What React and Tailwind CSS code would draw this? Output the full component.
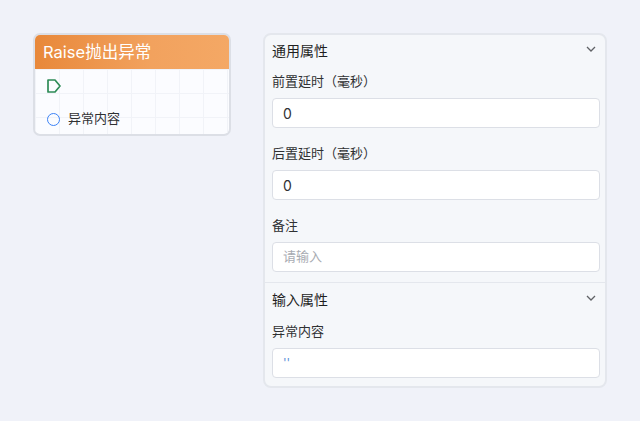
import React from "react";

const font = { fontFamily: '"Inter", "Noto Sans CJK SC", sans-serif' };

function Chevron() {
  return (
    <svg width="10" height="6" viewBox="0 0 10 6" fill="none">
      <path d="M1 1l4 4 4-4" stroke="#606266" strokeWidth="1.3" />
    </svg>
  );
}

function Field({ label, value, placeholder, mono }) {
  return (
    <div className="flex flex-col">
      <div className="h-[22px] text-[13px] leading-[22px] text-[#303133]">{label}</div>
      <div className="mt-[6px] h-[30px] rounded-[4px] border border-[#dcdfe6] bg-white px-[10px] flex items-center text-[14px]">
        {value !== undefined ? (
          <span className={mono ? "text-[#5a8fd8] text-[12px]" : "text-[#303133]"}>{value}</span>
        ) : (
          <span className="text-[#a8abb2] text-[13px]">{placeholder}</span>
        )}
      </div>
    </div>
  );
}

export default function App() {
  return (
    <div className="w-[640px] h-[421px] bg-[#f0f2f9] relative" style={font}>
      <div className="flex items-start pt-[33px] pl-[33px]">
        {/* Node */}
        <div className="w-[198px] h-[103px] rounded-[7px] border-2 border-[#dcdfe6] overflow-hidden bg-[#fbfcff] flex flex-col">
          <div className="h-[34px] shrink-0 flex items-center px-[8px] text-white text-[16.5px] bg-[linear-gradient(90deg,#e8883a,#f2a25e_60%,#f4a865)]">
            Raise抛出异常
          </div>
          <div
            className="flex-1 flex flex-col pl-[11px]"
            style={{
              backgroundImage:
                "linear-gradient(#f1f3f8 1px, transparent 1px), linear-gradient(90deg, #f1f3f8 1px, transparent 1px)",
              backgroundSize: "24px 24px",
            }}
          >
            <div className="h-[34px] flex items-center">
              <svg width="16" height="16" viewBox="0 0 16 16" fill="none">
                <path d="M2 2h7l5 6-5 6H2z" stroke="#2e8b57" strokeWidth="1.7" strokeLinejoin="round" />
              </svg>
            </div>
            <div className="h-[32px] flex items-center gap-[8px] pl-[1px]">
              <span className="w-[13px] h-[13px] rounded-full border-[1.6px] border-[#3b82f6]" />
              <span className="text-[13px] text-[#303133]">异常内容</span>
            </div>
          </div>
        </div>

        {/* Panel */}
        <div className="ml-[32px] w-[344px] h-[355px] rounded-[8px] border-2 border-[#e4e7ed] bg-[#f5f7fa] flex flex-col">
          <div className="pl-[7px] pr-[5px]">
            <div className="h-[30px] flex items-center justify-between pt-[1px]">
              <span className="text-[14px] text-[#1f1f1f]">通用属性</span>
              <span className="mr-[4px] mb-[4px]"><Chevron /></span>
            </div>
            <div className="flex flex-col gap-[14px] pt-[5px]">
              <Field label="前置延时（毫秒）" value="0" />
              <Field label="后置延时（毫秒）" value="0" />
              <Field label="备注" placeholder="请输入" />
            </div>
          </div>
          <div className="mt-[10px] border-t border-[#e4e7ed] pl-[7px] pr-[5px]">
            <div className="h-[32px] flex items-center justify-between pt-[1px]">
              <span className="text-[14px] text-[#1f1f1f]">输入属性</span>
              <span className="mr-[4px] mb-[4px]"><Chevron /></span>
            </div>
            <div className="pt-[5px]">
              <Field label="异常内容" value="''" mono />
            </div>
          </div>
        </div>
      </div>
    </div>
  );
}
